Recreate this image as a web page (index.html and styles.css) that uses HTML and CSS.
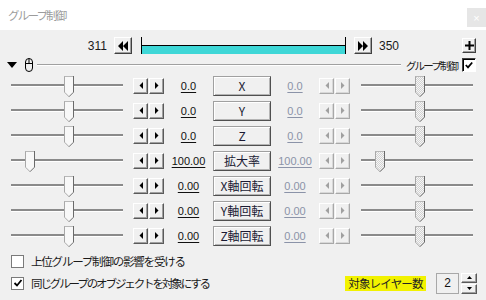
FILE: index.html
```html
<!DOCTYPE html>
<html>
<head>
<meta charset="utf-8">
<link rel="stylesheet" href="styles.css">
</head>
<body>
<svg class="defs" width="0" height="0">
  <defs>
    <pattern id="dots" width="2" height="2" patternUnits="userSpaceOnUse">
      <rect width="2" height="2" fill="#f6f6f6"/>
      <rect width="1" height="1" fill="#d2d2d2"/>
      <rect x="1" y="1" width="1" height="1" fill="#d2d2d2"/>
    </pattern>
    <symbol id="thumb" viewBox="0 0 10 21">
      <path d="M0 0 H10 V16 L5 21 L0 16 Z"/>
      <path d="M0.5 16 V0.5 H9" stroke="#ffffff" fill="none"/>
      <path d="M0.5 0 V16.2 L5 20.7" stroke="#a8a8a8" fill="none"/>
      <path d="M9.5 0 V16.2 L5 20.7" stroke="#6a6a6a" fill="none"/>
      <path d="M0.5 0.5 H9" stroke="#b8b8b8" fill="none"/>
    </symbol>
    <symbol id="la" viewBox="0 0 4 7"><path d="M4 0 V7 L0.5 3.5 Z"/></symbol>
    <symbol id="ra" viewBox="0 0 4 7"><path d="M0 0 V7 L3.5 3.5 Z"/></symbol>
  </defs>
</svg>

<div class="win">
  <div class="titlebar">
    <span class="title">グループ制御</span>
    <span class="close">×</span>
  </div>

  <div class="content">
    <div class="frame-row">
      <span class="fnum left">311</span>
      <span class="btn3d nav">
        <svg width="10" height="10" viewBox="0 0 10 10"><path d="M0 5 L5 0 V10 Z M5 5 L10 0 V10 Z" fill="#000"/></svg>
      </span>
      <div class="bar"><div class="bar-fill"></div></div>
      <span class="btn3d nav">
        <svg width="10" height="10" viewBox="0 0 10 10"><path d="M0 0 L5 5 L0 10 Z M5 0 L10 5 L5 10 Z" fill="#000"/></svg>
      </span>
      <span class="fnum">350</span>
      <span class="btn3d plus">
        <svg width="9" height="9" viewBox="0 0 9 9"><path d="M3.5 0 H5.5 V3.5 H9 V5.5 H5.5 V9 H3.5 V5.5 H0 V3.5 H3.5 Z" fill="#000"/></svg>
      </span>
    </div>

    <div class="header-row">
      <svg class="tri" width="10" height="7" viewBox="0 0 10 7"><path d="M0 0 H10 L5 6 Z" fill="#000"/></svg>
      <svg class="mouse" width="10" height="14" viewBox="0 0 10 14">
        <path d="M1.5 4 Q1.5 0.5 5 0.5 Q8.5 0.5 8.5 4 V10 Q8.5 13.5 5 13.5 Q1.5 13.5 1.5 10 Z M1.5 5.5 H8.5 M5 0.5 V5.5" fill="none" stroke="#000"/>
      </svg>
      <div class="hline"></div>
      <span class="hdr-label">グループ制御</span>
      <span class="cb cb-dark">
        <svg width="8" height="8" viewBox="0 0 8 8"><path d="M0.8 4 L3 6.3 L7.2 1.5" fill="none" stroke="#000" stroke-width="1.8"/></svg>
      </span>
    </div>

    <div class="tracks">
      <div class="trow">
        <div class="slider"><div class="groove"></div><svg class="thumb" style="left:53px"><use href="#thumb"/></svg></div>
        <div class="arrows"><span class="ab"><svg width="4" height="7"><use href="#la"/></svg></span><span class="ab"><svg width="4" height="7"><use href="#ra"/></svg></span></div>
        <span class="val">0.0</span>
        <span class="pbtn">X</span>
        <span class="val dis">0.0</span>
        <div class="arrows dis"><span class="ab"><svg width="4" height="7"><use href="#la"/></svg></span><span class="ab"><svg width="4" height="7"><use href="#ra"/></svg></span></div>
        <div class="slider dis"><div class="groove"></div><svg class="thumb" style="left:54px"><use href="#thumb"/></svg></div>
      </div>
      <div class="trow">
        <div class="slider"><div class="groove"></div><svg class="thumb" style="left:53px"><use href="#thumb"/></svg></div>
        <div class="arrows"><span class="ab"><svg width="4" height="7"><use href="#la"/></svg></span><span class="ab"><svg width="4" height="7"><use href="#ra"/></svg></span></div>
        <span class="val">0.0</span>
        <span class="pbtn">Y</span>
        <span class="val dis">0.0</span>
        <div class="arrows dis"><span class="ab"><svg width="4" height="7"><use href="#la"/></svg></span><span class="ab"><svg width="4" height="7"><use href="#ra"/></svg></span></div>
        <div class="slider dis"><div class="groove"></div><svg class="thumb" style="left:54px"><use href="#thumb"/></svg></div>
      </div>
      <div class="trow">
        <div class="slider"><div class="groove"></div><svg class="thumb" style="left:53px"><use href="#thumb"/></svg></div>
        <div class="arrows"><span class="ab"><svg width="4" height="7"><use href="#la"/></svg></span><span class="ab"><svg width="4" height="7"><use href="#ra"/></svg></span></div>
        <span class="val">0.0</span>
        <span class="pbtn">Z</span>
        <span class="val dis">0.0</span>
        <div class="arrows dis"><span class="ab"><svg width="4" height="7"><use href="#la"/></svg></span><span class="ab"><svg width="4" height="7"><use href="#ra"/></svg></span></div>
        <div class="slider dis"><div class="groove"></div><svg class="thumb" style="left:54px"><use href="#thumb"/></svg></div>
      </div>
      <div class="trow">
        <div class="slider"><div class="groove"></div><svg class="thumb" style="left:14px"><use href="#thumb"/></svg></div>
        <div class="arrows"><span class="ab"><svg width="4" height="7"><use href="#la"/></svg></span><span class="ab"><svg width="4" height="7"><use href="#ra"/></svg></span></div>
        <span class="val">100.00</span>
        <span class="pbtn">拡大率</span>
        <span class="val dis">100.00</span>
        <div class="arrows dis"><span class="ab"><svg width="4" height="7"><use href="#la"/></svg></span><span class="ab"><svg width="4" height="7"><use href="#ra"/></svg></span></div>
        <div class="slider dis"><div class="groove"></div><svg class="thumb" style="left:14px"><use href="#thumb"/></svg></div>
      </div>
      <div class="trow">
        <div class="slider"><div class="groove"></div><svg class="thumb" style="left:53px"><use href="#thumb"/></svg></div>
        <div class="arrows"><span class="ab"><svg width="4" height="7"><use href="#la"/></svg></span><span class="ab"><svg width="4" height="7"><use href="#ra"/></svg></span></div>
        <span class="val">0.00</span>
        <span class="pbtn">X軸回転</span>
        <span class="val dis">0.00</span>
        <div class="arrows dis"><span class="ab"><svg width="4" height="7"><use href="#la"/></svg></span><span class="ab"><svg width="4" height="7"><use href="#ra"/></svg></span></div>
        <div class="slider dis"><div class="groove"></div><svg class="thumb" style="left:54px"><use href="#thumb"/></svg></div>
      </div>
      <div class="trow">
        <div class="slider"><div class="groove"></div><svg class="thumb" style="left:53px"><use href="#thumb"/></svg></div>
        <div class="arrows"><span class="ab"><svg width="4" height="7"><use href="#la"/></svg></span><span class="ab"><svg width="4" height="7"><use href="#ra"/></svg></span></div>
        <span class="val">0.00</span>
        <span class="pbtn">Y軸回転</span>
        <span class="val dis">0.00</span>
        <div class="arrows dis"><span class="ab"><svg width="4" height="7"><use href="#la"/></svg></span><span class="ab"><svg width="4" height="7"><use href="#ra"/></svg></span></div>
        <div class="slider dis"><div class="groove"></div><svg class="thumb" style="left:54px"><use href="#thumb"/></svg></div>
      </div>
      <div class="trow">
        <div class="slider"><div class="groove"></div><svg class="thumb" style="left:53px"><use href="#thumb"/></svg></div>
        <div class="arrows"><span class="ab"><svg width="4" height="7"><use href="#la"/></svg></span><span class="ab"><svg width="4" height="7"><use href="#ra"/></svg></span></div>
        <span class="val">0.00</span>
        <span class="pbtn">Z軸回転</span>
        <span class="val dis">0.00</span>
        <div class="arrows dis"><span class="ab"><svg width="4" height="7"><use href="#la"/></svg></span><span class="ab"><svg width="4" height="7"><use href="#ra"/></svg></span></div>
        <div class="slider dis"><div class="groove"></div><svg class="thumb" style="left:54px"><use href="#thumb"/></svg></div>
      </div>
    </div>

    <div class="bottom">
      <div class="brow">
        <span class="cb"></span>
        <span class="cb-label upper">上位グループ制御の影響を受ける</span>
      </div>
      <div class="brow">
        <span class="cb">
          <svg width="10" height="10" viewBox="0 0 10 10"><path d="M1.5 5 L4 7.5 L8.5 2" fill="none" stroke="#000" stroke-width="1.8"/></svg>
        </span>
        <span class="cb-label same">同じグループのオブジェクトを対象にする</span>
        <span class="layer-label">対象レイヤー数</span>
        <span class="spin-edit">2</span>
        <div class="spin-btns">
          <span class="sb"><svg width="5" height="3" viewBox="0 0 5 3"><path d="M0 3 L2.5 0 L5 3 Z" fill="#000"/></svg></span>
          <span class="sb"><svg width="5" height="3" viewBox="0 0 5 3"><path d="M0 0 L2.5 3 L5 0 Z" fill="#000"/></svg></span>
        </div>
      </div>
    </div>
  </div>
</div>
</body>
</html>
```

FILE: styles.css
```css
* { box-sizing: border-box; }

html, body {
  margin: 0;
  padding: 0;
  background: #f0f0f0;
  font-family: "Liberation Sans", Arial, sans-serif;
}

.defs {
  position: absolute;
  width: 0;
  height: 0;
  overflow: hidden;
}

.win {
  width: 486px;
  height: 300px;
  display: flex;
  flex-direction: column;
  overflow: hidden;
}

/* ---------- title bar ---------- */
.titlebar {
  height: 30px;
  background: #ffffff;
  display: flex;
  align-items: center;
  padding-left: 8px;
}

.title {
  font-family: "Noto Sans CJK JP", sans-serif;
  font-feature-settings: "pwid";
  font-size: 11.5px;
  letter-spacing: -1.8px;
  color: #9c9c9c;
  white-space: nowrap;
}

.close {
  margin-left: auto;
  align-self: flex-end;
  margin-bottom: 3px;
  width: 19px;
  height: 19px;
  background: #e6e6e6;
  color: #ffffff;
  font-size: 11px;
  display: flex;
  align-items: center;
  justify-content: center;
}

/* ---------- content ---------- */
.content {
  flex: 1;
  padding-top: 7px;
}

.btn3d {
  display: flex;
  align-items: center;
  justify-content: center;
  background: #f0f0f0;
  border: 1px solid;
  border-color: #ffffff #404040 #404040 #ffffff;
  box-shadow: inset -1px -1px #a0a0a0;
}

/* frame row */
.frame-row {
  height: 17px;
  display: flex;
  align-items: center;
  padding-left: 77px;
  padding-right: 10px;
}

.fnum {
  font-size: 12px;
  color: #1a1a1a;
  width: 30px;
}

.fnum.left {
  text-align: right;
  margin-right: 7px;
}

.fnum:not(.left) {
  margin-left: 7px;
}

.nav {
  width: 18px;
  height: 17px;
}

.bar {
  width: 205px;
  height: 17px;
  margin: 0 8px 0 9px;
  border-left: 1px solid #000;
  border-right: 1px solid #000;
  display: flex;
  flex-direction: column;
  justify-content: flex-end;
}

.bar-fill {
  height: 9px;
  border-top: 1px solid #000;
  background: #3fd7d7;
}

.plus {
  margin-left: auto;
  width: 14px;
  height: 15px;
}

/* header row */
.header-row {
  height: 16px;
  margin-top: 3px;
  display: flex;
  align-items: center;
  padding: 0 10px 0 7px;
}

.tri {
  margin-right: 7px;
}

.mouse {
  margin-right: 3px;
}

.hline {
  flex: 1;
  height: 2px;
  border-top: 1px solid #a0a0a0;
  border-bottom: 1px solid #ffffff;
  margin-right: 5px;
}

.hdr-label {
  font-family: "Noto Sans CJK JP", sans-serif;
  font-feature-settings: "pwid";
  font-size: 10.5px;
  letter-spacing: -1.9px;
  color: #1a1a1a;
  margin-right: 5px;
  white-space: nowrap;
}

.cb {
  width: 13px;
  height: 13px;
  background: #ffffff;
  border: 1px solid #7a7a7a;
  display: flex;
  align-items: center;
  justify-content: center;
  flex: none;
}

.cb-dark {
  width: 14px;
  height: 14px;
  border-color: #404040 #ffffff #ffffff #404040;
  box-shadow: inset 1px 1px #000;
}

/* tracks */
.tracks {
  display: flex;
  flex-direction: column;
}

.trow {
  height: 25px;
  display: flex;
  align-items: center;
  padding-left: 11px;
}

.slider {
  position: relative;
  width: 112px;
  height: 25px;
  flex: none;
}

.groove {
  margin-top: 11px;
  height: 3px;
  border-top: 2px solid #8a8a8a;
  border-bottom: 1px solid #ffffff;
}

.thumb {
  position: absolute;
  top: 3px;
  width: 10px;
  height: 21px;
  fill: #f8f8f8;
}

.slider.dis .thumb {
  fill: url(#dots);
}

.slider.dis {
  margin-left: 11px;
}

.arrows {
  display: flex;
  gap: 1px;
  margin-left: 10px;
  flex: none;
}

.arrows.dis {
  margin-left: 0;
}

.ab {
  width: 15px;
  height: 16px;
  display: flex;
  align-items: center;
  justify-content: center;
  background: #f0f0f0;
  border: 1px solid;
  border-color: #ffffff #5a5a5a #5a5a5a #ffffff;
  box-shadow: inset -1px -1px #a0a0a0;
  fill: #000;
}

.arrows.dis .ab {
  border-color: #ffffff #a8a8a8 #a8a8a8 #ffffff;
  box-shadow: inset -1px -1px #d8d8d8;
  fill: #a0a0a0;
}

.val {
  width: 49px;
  text-align: center;
  font-size: 11px;
  color: #111;
  text-decoration: underline;
  text-underline-offset: 2px;
  flex: none;
}

.val.dis {
  width: 48px;
  color: #8b93a8;
}

.pbtn {
  width: 58px;
  height: 20px;
  flex: none;
  display: flex;
  align-items: center;
  justify-content: center;
  font-family: "Noto Sans CJK JP", sans-serif;
  font-size: 12px;
  color: #1a1a33;
  background: #f0f0f0;
  border: 1px solid;
  border-color: #a0a0a0 #505050 #505050 #a0a0a0;
  box-shadow: inset 1px 1px #ffffff, inset -1px -1px #b4b4b4;
}

/* bottom */
.bottom {
  margin-top: 2px;
}

.brow {
  height: 22px;
  display: flex;
  align-items: center;
  padding-left: 11px;
  padding-right: 9px;
}

.cb-label {
  margin-left: 7px;
  font-family: "Noto Sans CJK JP", sans-serif;
  font-feature-settings: "pwid";
  font-size: 11.5px;
  color: #1a1a1a;
  white-space: nowrap;
}

.cb-label.upper {
  letter-spacing: -1.2px;
}

.cb-label.same {
  letter-spacing: -2.1px;
}

.layer-label {
  margin-left: auto;
  width: 81px;
  height: 15px;
  background: #f2f200;
  font-family: "Noto Sans CJK JP", sans-serif;
  font-feature-settings: "pwid";
  font-size: 11.5px;
  letter-spacing: -0.8px;
  color: #222;
  white-space: nowrap;
  display: flex;
  align-items: center;
  justify-content: center;
}

.spin-edit {
  margin-left: 10px;
  width: 23px;
  height: 21px;
  border: 1px solid #a8a8a8;
  background: #f0f0f0;
  font-size: 12px;
  display: flex;
  align-items: center;
  justify-content: center;
  color: #111;
}

.spin-btns {
  margin-left: 2px;
  display: flex;
  flex-direction: column;
}

.sb {
  width: 16px;
  height: 10px;
  display: flex;
  align-items: center;
  justify-content: center;
  background: #f0f0f0;
  border: 1px solid;
  border-color: #ffffff #5a5a5a #5a5a5a #ffffff;
  box-shadow: inset -1px -1px #a0a0a0;
}

.sb + .sb {
  margin-top: 1px;
}
```
